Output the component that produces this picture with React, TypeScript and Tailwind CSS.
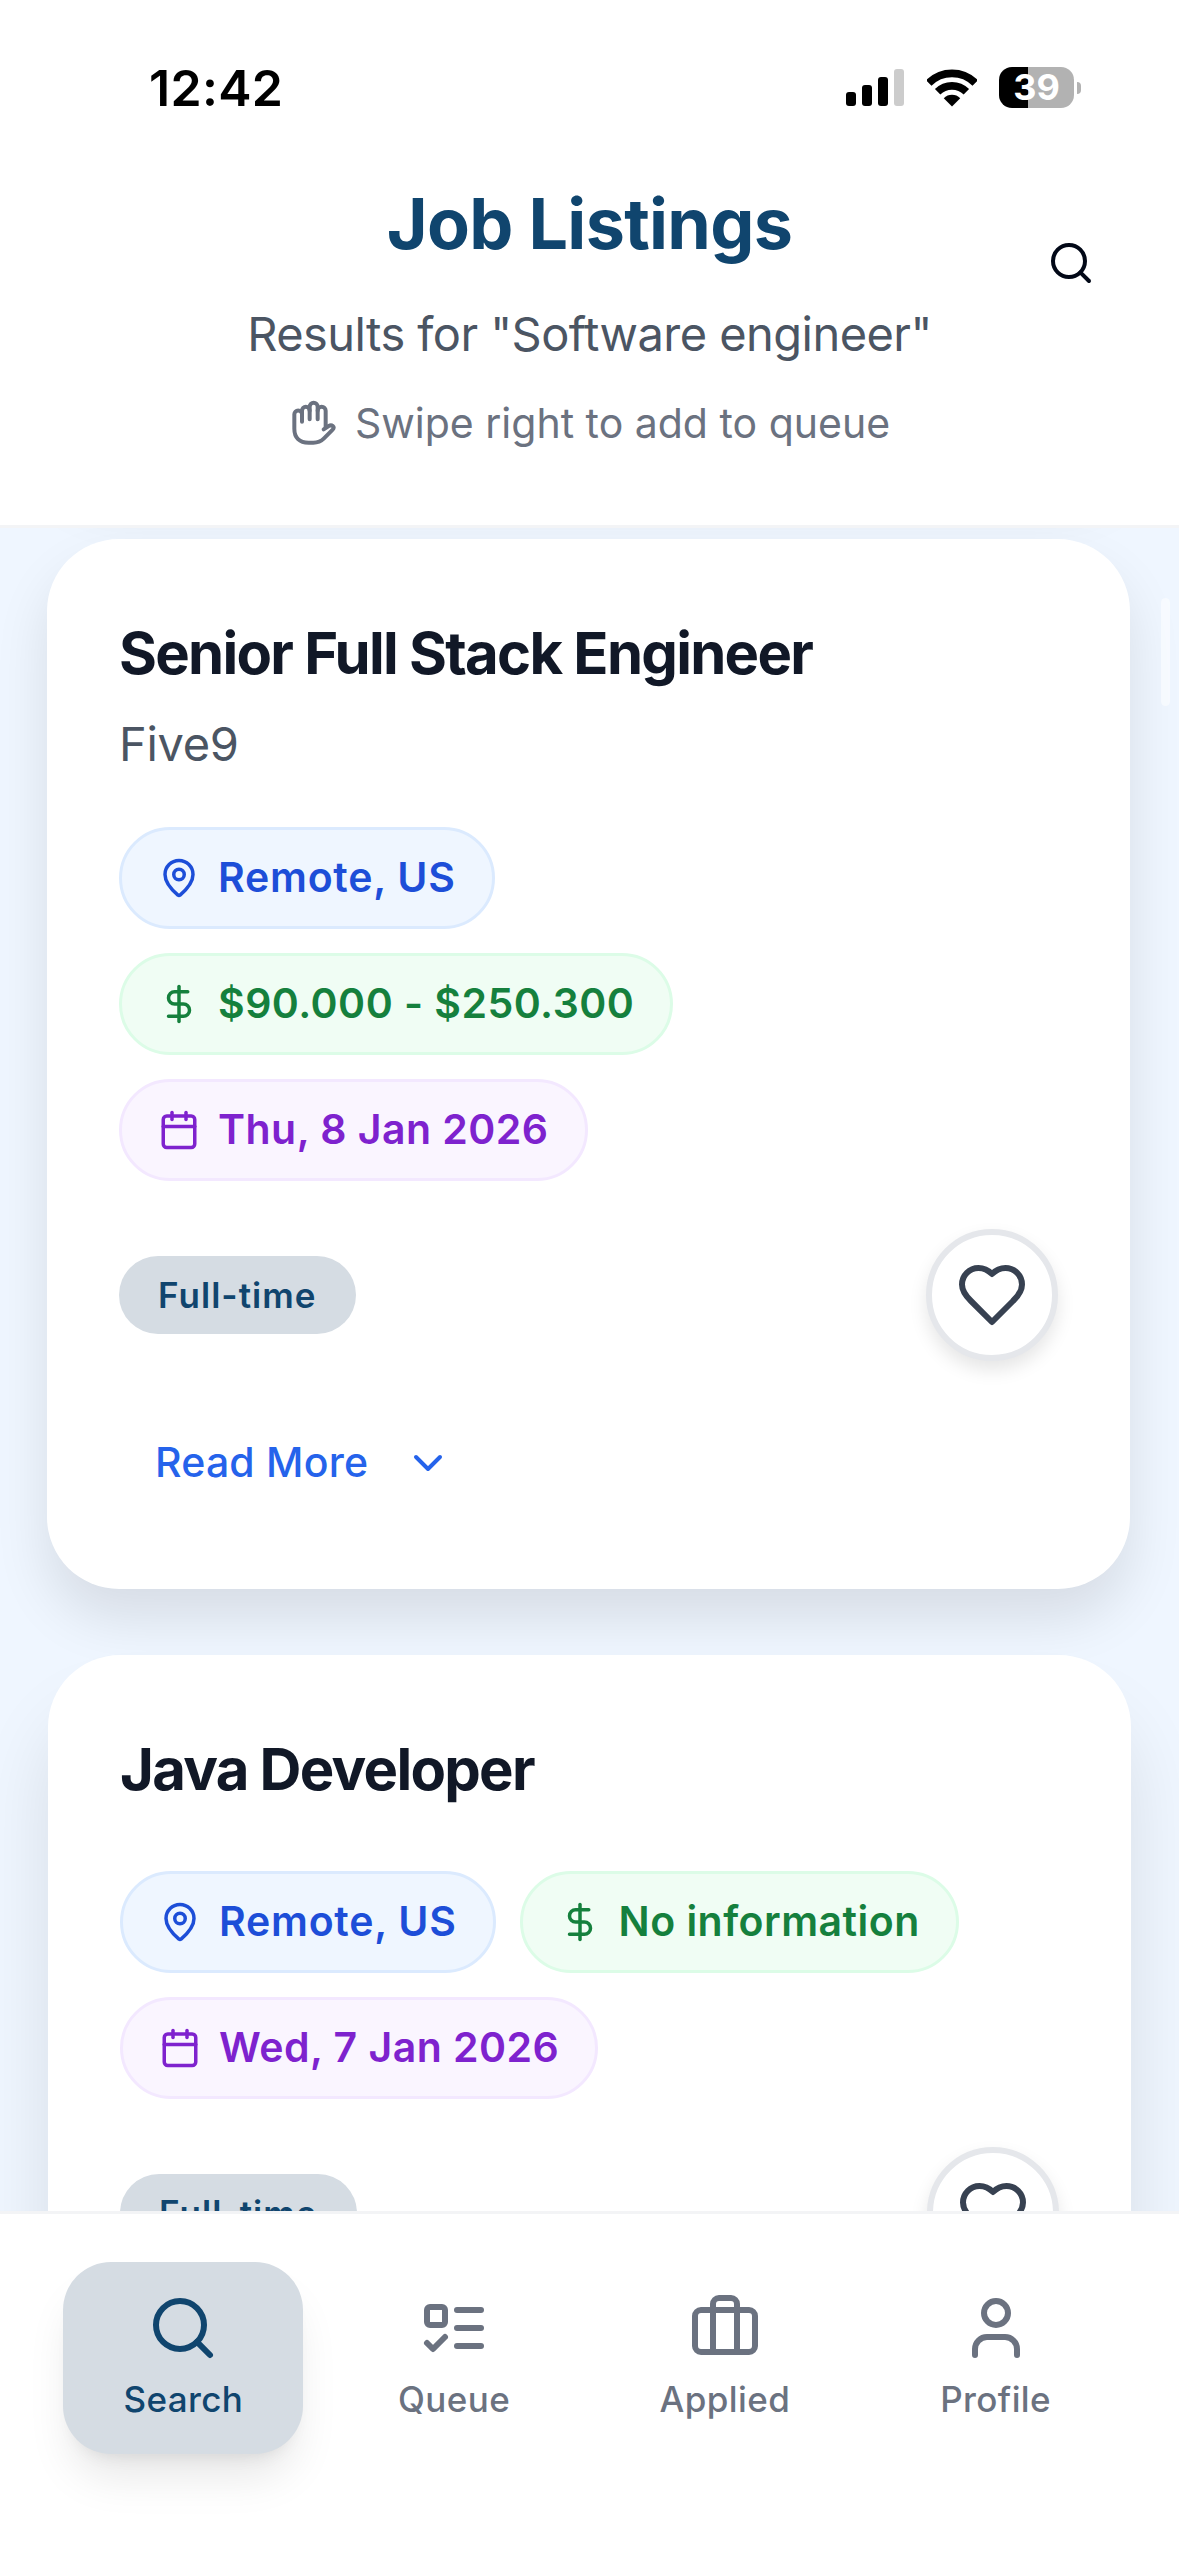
import type { ReactNode } from "react";
import { Briefcase, Calendar, ChevronDown, DollarSign, MapPin, Search, User } from "lucide-react";

interface Job {
  id: number;
  title: string;
  company?: string;
  location: string;
  salary: string;
  date: string;
  type: string;
}

const jobs: Job[] = [
  {
    id: 1,
    title: "Senior Full Stack Engineer",
    company: "Five9",
    location: "Remote, US",
    salary: "$90.000 - $250.300",
    date: "Thu, 8 Jan 2026",
    type: "Full-time",
  },
  {
    id: 2,
    title: "Java Developer",
    location: "Remote, US",
    salary: "No information",
    date: "Wed, 7 Jan 2026",
    type: "Full-time",
  },
];

function HandIcon() {
  return (
    <svg
      className="size-12 shrink-0"
      viewBox="24 27 144 144"
      fill="none"
      stroke="currentColor"
      strokeWidth="12"
      strokeLinecap="round"
      strokeLinejoin="round"
    >
      <path d="M63 95V62a11.5 11.5 0 0 1 23 0" />
      <path d="M86 88V50a12 12 0 0 1 24 0V88" />
      <path d="M110 62a12 12 0 0 1 24 0V112" />
      <path d="M63 73a11.5 11.5 0 0 0-23 0V116C40 143 55 158 83 158H97C110 158 120 154 129 145L155 119C164 110 152 103 143 108L128 118" />
    </svg>
  );
}

function HeartIcon() {
  return (
    <svg
      className="size-18"
      viewBox="0 0 24 24"
      fill="none"
      stroke="currentColor"
      strokeWidth="2"
      strokeLinecap="round"
      strokeLinejoin="round"
    >
      <path d="M19 14c1.49-1.46 3-3.21 3-5.5A5.5 5.5 0 0 0 16.5 3c-1.76 0-3 .5-4.5 2-1.5-1.5-2.74-2-4.5-2A5.5 5.5 0 0 0 2 8.5c0 2.3 1.5 4.05 3 5.5l7 7Z" />
    </svg>
  );
}

function QueueIcon() {
  return (
    <svg
      className="size-18"
      viewBox="0 0 24 24"
      fill="none"
      stroke="currentColor"
      strokeWidth="2"
      strokeLinecap="round"
      strokeLinejoin="round"
    >
      <rect x="3" y="5" width="6" height="6" rx="1" />
      <path d="m3 17 2 2 4-4" />
      <path d="M13 6h8" />
      <path d="M13 12h8" />
      <path d="M13 18h8" />
    </svg>
  );
}

function StatusBar() {
  return (
    <div className="flex h-[177px] justify-between pr-[98px] pl-[149px]">
      <span className="mt-[58px] h-[60px] text-[50px] leading-[60px] font-semibold tracking-[0.3px] text-black">
        12:42
      </span>
      <div className="mt-[67px] flex h-[41px] items-center">
        <div className="mr-[23px] flex h-[37px] items-end gap-[6px]">
          <span className="h-[14px] w-[10px] rounded-[3px] bg-black" />
          <span className="h-[21px] w-[10px] rounded-[3px] bg-black" />
          <span className="h-[29px] w-[10px] rounded-[3px] bg-black" />
          <span className="h-[37px] w-[10px] rounded-[3px] bg-[#cccccc]" />
        </div>
        <svg className="mr-[22px] h-[38px] w-[50px]" viewBox="440 86 150 113">
          <path
            d="M445.4 127.4A98.5 98.5 0 0 1 584.6 127.4M471.9 153.9A61 61 0 0 1 558.1 153.9"
            fill="none"
            stroke="black"
            strokeWidth="23"
          />
          <path d="M515 198L490.3 173A35 35 0 0 1 539.7 173Z" />
        </svg>
        <div className="flex h-[41px] w-[75px] items-center justify-center rounded-[13px] bg-[linear-gradient(90deg,#000_29px,#b2b2b2_29px)] text-[36px] leading-[41px] font-bold text-white">
          39
        </div>
        <span className="ml-[3px] h-[12px] w-[4px] rounded-r-full bg-[#b2b2b2]" />
      </div>
    </div>
  );
}

function Header() {
  return (
    <header className="h-[528px] shrink-0 border-b-3 border-[#f3f4f6] bg-white">
      <StatusBar />
      <div className="grid grid-cols-[216px_1fr_216px]">
        <span />
        <div className="flex flex-col items-center whitespace-nowrap">
          <h1 className="text-[70px] leading-[93px] font-bold tracking-[-0.7px] text-[#10456e]">
            Job Listings
          </h1>
          <p className="mt-[28px] text-[47px] leading-[72px] tracking-[-0.55px] text-[#4b5563]">
            Results for "Software engineer"
          </p>
          <div className="mt-[23px] flex items-center gap-[18px] text-[#6b7280]">
            <HandIcon />
            <span className="text-[41px] leading-[60px]">Swipe right to add to queue</span>
          </div>
        </div>
        <button className="mt-[62px] h-12 justify-self-center text-[#020817]">
          <Search className="size-12" />
        </button>
      </div>
    </header>
  );
}

interface PillProps {
  className: string;
  icon: ReactNode;
  label: string;
}

function Pill({ className, icon, label }: PillProps) {
  return (
    <div
      className={`flex h-[102px] items-center gap-[18px] rounded-full border-3 px-9 text-[41px] font-semibold whitespace-nowrap ${className}`}
    >
      {icon}
      <span>{label}</span>
    </div>
  );
}

interface JobCardProps {
  job: Job;
  className: string;
}

function JobCard({ job, className }: JobCardProps) {
  return (
    <article className={`shrink-0 rounded-[72px] bg-white p-[72px] ${className}`}>
      <h2 className="text-[58px] leading-[84px] font-bold tracking-[-1.72px] whitespace-nowrap text-[#111827]">
        {job.title}
      </h2>
      {job.company && (
        <p className="mt-3 text-[47px] leading-[73px] tracking-[-0.3px] text-[#4b5563]">
          {job.company}
        </p>
      )}
      <div className={`flex flex-wrap gap-6 ${job.company ? "mt-[47px]" : "mt-[60px]"}`}>
        <Pill
          className="border-[#dbeafe] bg-[#eff6ff] tracking-[0.75px] text-[#1d4ed8]"
          icon={<MapPin className="size-[42px]" />}
          label={job.location}
        />
        <Pill
          className="border-[#dcfce7] bg-[#f0fdf4] tracking-[0.47px] text-[#15803d]"
          icon={<DollarSign className="size-[42px]" />}
          label={job.salary}
        />
        <Pill
          className="border-[#f3e8ff] bg-[#faf5ff] tracking-[0.47px] text-[#7e22ce]"
          icon={<Calendar className="size-[42px]" />}
          label={job.date}
        />
      </div>
      <div className="mt-12 flex items-center justify-between">
        <span className="flex h-[78px] items-center rounded-full bg-[#d5dce3] px-[39px] text-[35px] font-semibold tracking-[1.05px] text-[#10456e]">
          {job.type}
        </span>
        <button className="flex size-[132px] items-center justify-center rounded-full border-6 border-[#e5e7eb] bg-white text-[#374151] shadow-[0_9px_18px_rgba(0,0,0,0.1)]">
          <HeartIcon />
        </button>
      </div>
      <button className="mt-12 flex h-[108px] items-center gap-9 px-9 text-[41px] font-medium tracking-[0.2px] text-[#2563eb]">
        Read More
        <ChevronDown className="size-12" />
      </button>
    </article>
  );
}

interface TabProps {
  icon: ReactNode;
  label: string;
  active?: boolean;
}

function Tab({ icon, label, active }: TabProps) {
  return (
    <div className="flex flex-1 justify-center">
      <button
        className={`flex h-48 w-60 flex-col items-center rounded-[48px] pt-[30px] ${
          active
            ? "bg-[#d5dce3] text-[#10456e] shadow-[0_30px_45px_-9px_rgba(0,0,0,0.1),0_12px_18px_-12px_rgba(0,0,0,0.1)]"
            : "text-[#6b7280]"
        }`}
      >
        {icon}
        <span className="mt-[11px] text-[35px] leading-[48px] font-medium tracking-[0.4px]">
          {label}
        </span>
      </button>
    </div>
  );
}

function App() {
  return (
    <div className="flex h-[2556px] w-[1179px] flex-col overflow-hidden bg-white font-['Inter',sans-serif]">
      <Header />
      <main className="relative flex min-h-0 flex-1 flex-col overflow-hidden bg-[#eff6ff]">
        {/* tail of the card scrolled under the header */}
        <div className="mx-12 -mt-[655px] mb-[66px] h-[600px] shrink-0 rounded-[72px] bg-white shadow-[0_30px_54px_rgba(0,0,0,0.1)]" />
        <JobCard
          job={jobs[0]}
          className="mr-[49px] mb-[66px] ml-[47px] shadow-[0_30px_54px_rgba(0,0,0,0.1)]"
        />
        <JobCard job={jobs[1]} className="mx-12 shadow-[0_60px_75px_rgba(0,0,0,0.1)]" />
        <span className="absolute top-[70px] right-[9px] h-[108px] w-[9px] rounded-full bg-white/50" />
      </main>
      <nav className="flex h-[345px] shrink-0 border-t-3 border-[#f3f4f6] bg-white px-12 pt-12">
        <Tab icon={<Search className="size-18" />} label="Search" active />
        <Tab icon={<QueueIcon />} label="Queue" />
        <Tab icon={<Briefcase className="size-18" />} label="Applied" />
        <Tab icon={<User className="size-18" />} label="Profile" />
      </nav>
    </div>
  );
}

export default App;
